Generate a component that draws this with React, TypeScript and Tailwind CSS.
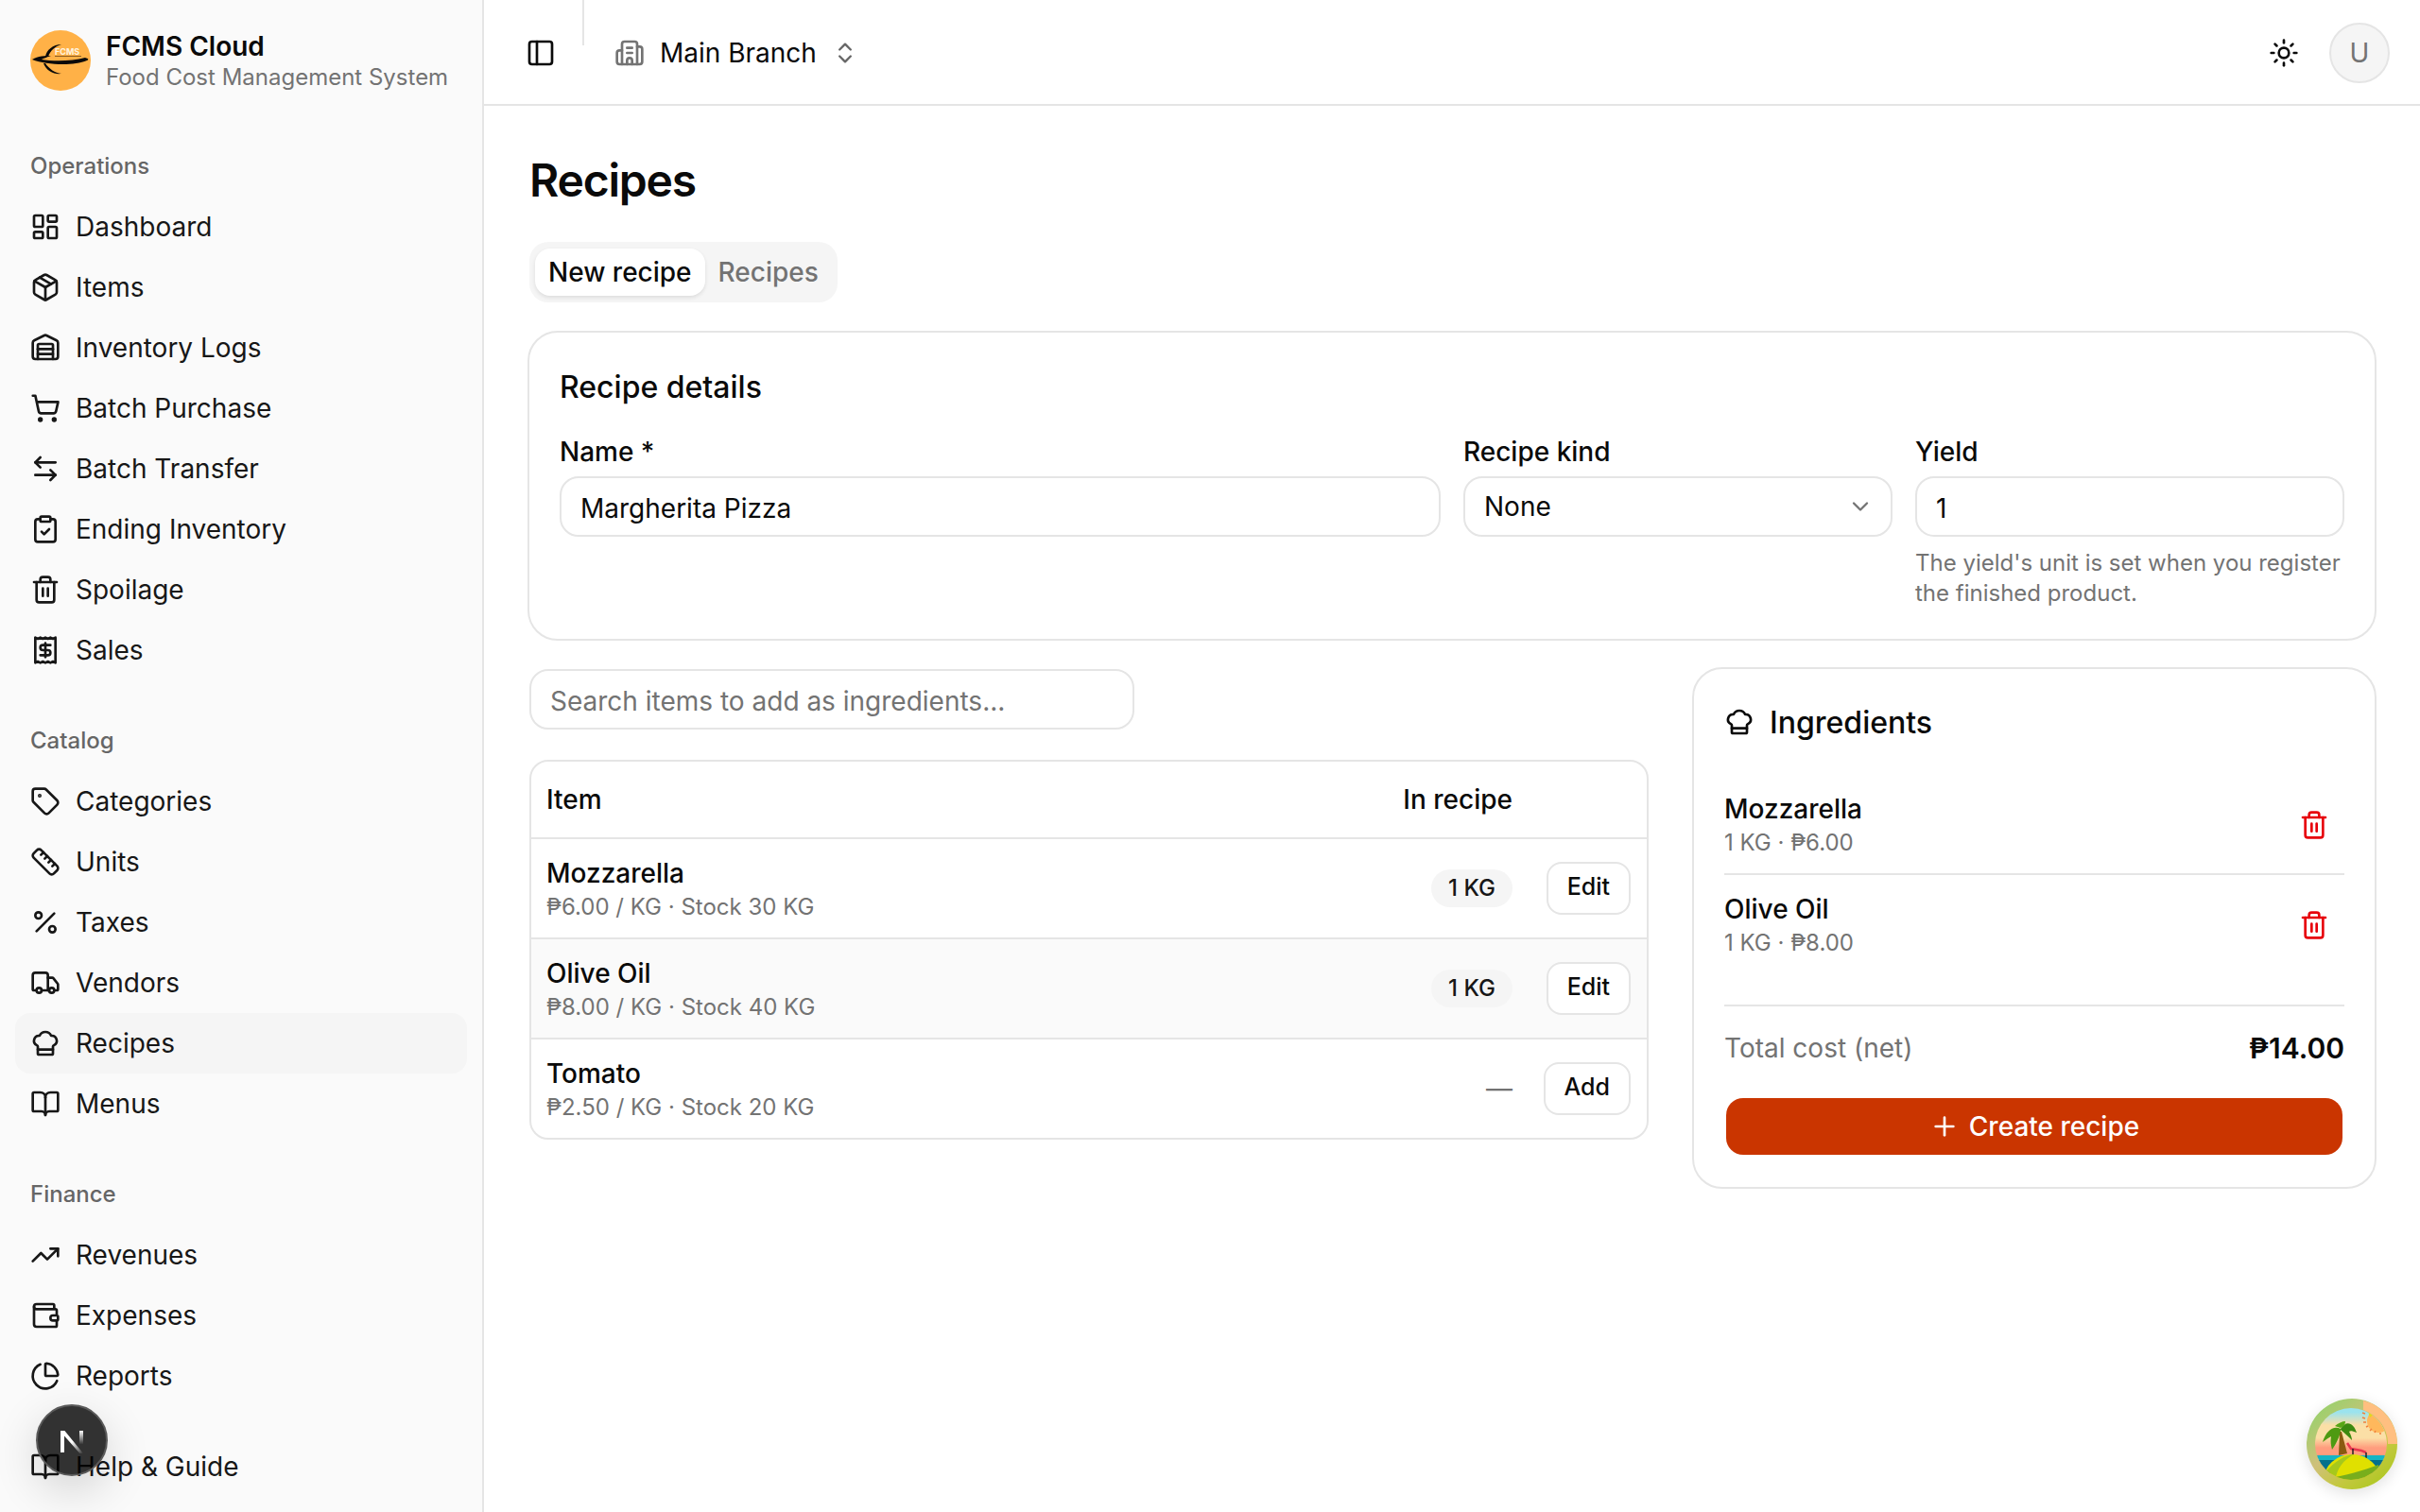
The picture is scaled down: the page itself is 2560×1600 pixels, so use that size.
import {
  ArrowLeftRight,
  BookOpen,
  Building2,
  ChartPie,
  ChefHat,
  ChevronDown,
  ChevronsUpDown,
  ClipboardCheck,
  LayoutDashboard,
  Package,
  PanelLeft,
  Percent,
  Plus,
  Receipt,
  Ruler,
  ShoppingCart,
  Sun,
  Tag,
  Trash2,
  TrendingUp,
  Truck,
  Wallet,
  Warehouse,
} from "lucide-react";

const groups = [
  {
    label: "Operations",
    items: [
      { name: "Dashboard", icon: LayoutDashboard },
      { name: "Items", icon: Package },
      { name: "Inventory Logs", icon: Warehouse },
      { name: "Batch Purchase", icon: ShoppingCart },
      { name: "Batch Transfer", icon: ArrowLeftRight },
      { name: "Ending Inventory", icon: ClipboardCheck },
      { name: "Spoilage", icon: Trash2 },
      { name: "Sales", icon: Receipt },
    ],
  },
  {
    label: "Catalog",
    items: [
      { name: "Categories", icon: Tag },
      { name: "Units", icon: Ruler },
      { name: "Taxes", icon: Percent },
      { name: "Vendors", icon: Truck },
      { name: "Recipes", icon: ChefHat, active: true },
      { name: "Menus", icon: BookOpen },
    ],
  },
  {
    label: "Finance",
    items: [
      { name: "Revenues", icon: TrendingUp },
      { name: "Expenses", icon: Wallet },
      { name: "Reports", icon: ChartPie },
    ],
  },
];

const rows = [
  { name: "Mozzarella", sub: "₱6.00 / KG · Stock 30 KG", qty: "1 KG", action: "Edit" },
  { name: "Olive Oil", sub: "₱8.00 / KG · Stock 40 KG", qty: "1 KG", action: "Edit", hover: true },
  { name: "Tomato", sub: "₱2.50 / KG · Stock 20 KG", qty: "", action: "Add" },
];

const picked = [
  { name: "Mozzarella", sub: "1 KG · ₱6.00" },
  { name: "Olive Oil", sub: "1 KG · ₱8.00" },
];

const LogoMark = () => (
  <svg viewBox="0 0 64 64" className="h-16 w-16 shrink-0">
    <circle cx="32" cy="32" r="32" fill="#ffb147" />
    <path d="M2 31 C8 27 16 27 22 27 C16 29 14 30 12 31 C24 33 44 33 58 29 C62 30 62 31 60 32 C46 38 18 37 2 31Z" fill="#0a0a0a" />
    <path d="M16 28 C17 21 24 15 33 15 C26 17 21 22 19 28Z" fill="#0a0a0a" />
    <path d="M16 35 C20 41 26 45 33 46 C25 47 17 43 14 35Z" fill="#0a0a0a" />
    <rect x="26" y="27" width="28" height="1" fill="#8a5a20" />
    <text x="26" y="26" fontSize="9" fontWeight="700" fill="#fff3df" fontFamily="Inter, sans-serif">
      FCMS
    </text>
  </svg>
);

const NextBadge = () => (
  <div className="absolute bottom-[38px] left-[38px] flex h-[76px] w-[76px] items-center justify-center rounded-full border-2 border-[#5a5a5a] bg-black/80 shadow-[0_16px_48px_rgba(0,0,0,0.16)]">
    <svg viewBox="0 0 24 24" className="mt-[3px] h-[24px] w-[24px]">
      <defs>
        <linearGradient id="nDiag" x1="0" y1="0" x2="1" y2="1">
          <stop offset="0.5" stopColor="#ffffff" />
          <stop offset="1" stopColor="#ffffff" stopOpacity="0" />
        </linearGradient>
        <linearGradient id="nSide" x1="0" y1="0" x2="0" y2="1">
          <stop offset="0" stopColor="#ffffff" />
          <stop offset="0.9" stopColor="#ffffff" stopOpacity="0" />
        </linearGradient>
      </defs>
      <path d="M0 0h4.4L24 24h-3.6L4 5.4V23H0Z" fill="url(#nDiag)" />
      <rect x="20" y="0" width="4" height="16" fill="url(#nSide)" />
    </svg>
  </div>
);

const BeachBadge = () => (
  <div className="absolute bottom-[24px] right-[24px] h-[96px] w-[96px] rounded-full shadow-[0_4px_16px_rgba(0,0,0,0.12)]">
    <svg viewBox="0 0 96 96" className="h-full w-full">
      <defs>
        <linearGradient id="ring" x1="0.1" y1="0" x2="0.9" y2="1">
          <stop offset="0" stopColor="#8fd46a" />
          <stop offset="0.45" stopColor="#cfc07a" />
          <stop offset="0.7" stopColor="#c4c840" />
          <stop offset="1" stopColor="#a8c81a" />
        </linearGradient>
        <linearGradient id="sky" x1="0" y1="0" x2="0" y2="1">
          <stop offset="0.08" stopColor="#9be3ee" />
          <stop offset="0.25" stopColor="#fbdfa6" />
          <stop offset="0.42" stopColor="#fbdfa6" />
          <stop offset="0.55" stopColor="#ff9d7e" />
        </linearGradient>
        <clipPath id="inner">
          <circle cx="47" cy="48" r="38" />
        </clipPath>
      </defs>
      <circle cx="48" cy="48" r="48" fill="url(#ring)" />
      <path d="M60 2 A48 48 0 0 1 96 48 L86 48 A38 38 0 0 0 60 12Z" fill="#ffbf80" />
      <g clipPath="url(#inner)">
        <rect x="0" y="8" width="96" height="80" fill="url(#sky)" />
        <circle cx="76" cy="24" r="12" fill="#ffb85c" />
        <path d="M65 13 h10 l-8 7Z" fill="#e3d91a" />
        <path d="M59 15 l3 1 M59 20 l3 1 M60 25 l3 0 M63 30 l2 -1 M67 34 l2 -2 M72 36 l1 -2 M78 38 l0 -2" stroke="#f0803c" strokeWidth="1.5" />
        <rect x="0" y="60" width="96" height="6" fill="#15b4c4" />
        <rect x="0" y="65" width="96" height="14" fill="#04708c" />
        <path d="M34 60 L35 35 L37 35 L43 58Z" fill="#8a5a10" />
        <path d="M36 32 C29 28 21 33 17 46 C21 43 24 41 26 40 C25 46 26 50 27 54 C31 48 35 41 36 34Z" fill="#4e9a12" />
        <path d="M36 32 C42 22 50 26 53 36 C48 34 46 34 45 35 C47 38 48 42 48 44 C44 40 40 36 36 33Z" fill="#3c8a10" />
        <path d="M30 29 C33 26 38 24 41 24 C41 28 38 30 36 31Z" fill="#58a616" />
        <path d="M43 47 L47 53 L58 55 L63 57" stroke="#e8384f" strokeWidth="2.5" fill="none" />
        <path d="M49 53 v7 M63 57 v6" stroke="#222222" strokeWidth="1.5" />
        <ellipse cx="48" cy="86" rx="30" ry="27" fill="#e0e000" />
        <path d="M20 78 C30 66 40 60 50 59 C38 66 32 74 30 88 L22 86Z" fill="#a6c81c" />
        <path d="M24 84 C40 82 60 76 76 70 L78 90 L28 92Z" fill="#78ae1c" />
        <path d="M32 90 C48 90 62 84 72 78 L64 92Z" fill="#4e9c10" />
      </g>
    </svg>
  </div>
);

const Sidebar = () => (
  <aside className="flex h-full w-[512px] shrink-0 flex-col border-r-2 border-[#e5e5e5] bg-[#fafafa]">
    <div className="flex h-[128px] shrink-0 items-start gap-4 pl-[32px] pt-[32px]">
      <LogoMark />
      <div className="flex flex-col">
        <span className="text-[28px] leading-[34px] font-semibold text-[#0a0a0a]">FCMS Cloud</span>
        <span className="text-[24px] leading-[32px] text-[#737373]">Food Cost Management System</span>
      </div>
    </div>
    <div className="min-h-0 flex-1 overflow-hidden">
      {groups.map((group) => (
        <div key={group.label} className="p-4">
          <div className="flex h-16 items-center px-4 text-[24px] font-medium text-[#666666]">{group.label}</div>
          {group.items.map((item) => (
            <div
              key={item.name}
              className={`flex h-16 items-center gap-4 rounded-2xl px-4 text-[28px] text-[#171717] ${item.active ? "bg-[#f5f5f5]" : ""}`}
            >
              <item.icon size={32} className="shrink-0" />
              <span>{item.name}</span>
            </div>
          ))}
        </div>
      ))}
    </div>
    <div className="p-4">
      <div className="flex h-16 items-center gap-4 rounded-2xl px-4 text-[28px] text-[#171717]">
        <BookOpen size={32} className="shrink-0" />
        <span>Help &amp; Guide</span>
      </div>
    </div>
  </aside>
);

const Topbar = () => (
  <header className="flex h-[112px] shrink-0 items-center border-b-2 border-[#e5e5e5] pl-8 pr-8 pt-[2px]">
    <button className="flex h-14 w-14 items-center justify-center text-[#0a0a0a]">
      <PanelLeft size={32} />
    </button>
    <div className="-mt-[2px] ml-4 h-12 w-[2px] self-start bg-[#e5e5e5]" />
    <div className="ml-8 flex items-center gap-4">
      <Building2 size={32} className="text-[#737373]" />
      <span className="text-[28px] text-[#0a0a0a]">Main Branch</span>
      <ChevronsUpDown size={28} className="text-[#666666]" />
    </div>
    <div className="ml-auto flex items-center gap-5">
      <button className="flex h-14 w-14 items-center justify-center text-[#0a0a0a]">
        <Sun size={32} />
      </button>
      <div className="flex h-16 w-16 items-center justify-center rounded-full border-2 border-[#e5e5e5] bg-[#f5f5f5] text-[28px] text-[#737373]">
        U
      </div>
    </div>
  </header>
);

const Field = ({ label, value }: { label: string; value: string }) => (
  <div>
    <label className="mb-2 block text-[28px] leading-9 font-medium text-[#0a0a0a]">{label}</label>
    <input
      readOnly
      value={value}
      className="h-16 w-full rounded-[20px] border-2 border-[#e5e5e5] bg-white pl-5 pt-[3px] text-[28px] text-[#0a0a0a] outline-none"
    />
  </div>
);

const DetailsCard = () => (
  <section className="-ml-[2px] mt-[30px] rounded-[32px] border-2 border-[#e5e5e5] bg-white p-8">
    <h2 className="pt-[2px] text-[32px] leading-[48px] font-medium text-[#0a0a0a]">Recipe details</h2>
    <div className="mt-[26px] grid grid-cols-4 gap-6">
      <div className="col-span-2">
        <Field label="Name *" value="Margherita Pizza" />
      </div>
      <div>
        <label className="mb-2 block text-[28px] leading-9 font-medium text-[#0a0a0a]">Recipe kind</label>
        <div className="flex h-16 items-center justify-between rounded-[20px] border-2 border-[#e5e5e5] bg-white pl-5 pr-[18px] text-[28px] text-[#0a0a0a]">
          <span>None</span>
          <ChevronDown size={28} className="text-[#737373]" />
        </div>
      </div>
      <div>
        <Field label="Yield" value="1" />
        <p className="mt-3 text-[24px] leading-8 text-[#737373]">
          The yield&apos;s unit is set when you register the finished product.
        </p>
      </div>
    </div>
  </section>
);

const ItemsTable = () => (
  <div className="mt-[32px] overflow-hidden rounded-[20px] border-2 border-[#e5e5e5] bg-white">
    <div className="flex h-[82px] items-center border-b-2 border-[#e5e5e5] pl-4 pr-[17px] text-[28px] font-medium text-[#0a0a0a]">
      <span className="flex-1">Item</span>
      <span className="mr-[125px]">In recipe</span>
    </div>
    {rows.map((row, i) => (
      <div
        key={row.name}
        className={`flex items-center pl-4 pr-[17px] ${i < rows.length - 1 ? "h-[106px] border-b-2 border-[#e5e5e5]" : "h-[104px]"} ${row.hover ? "bg-[#fafafa]" : ""}`}
      >
        <div className="flex-1 pt-[1px]">
          <div className="text-[28px] leading-9 font-medium text-[#0a0a0a]">{row.name}</div>
          <div className="mt-[2px] text-[24px] leading-8 text-[#737373]">{row.sub}</div>
        </div>
        {row.qty ? (
          <span className="flex h-10 items-center rounded-full bg-[#f5f5f5] px-[18px] text-[24px] font-medium text-[#171717]">
            {row.qty}
          </span>
        ) : (
          <span className="text-[28px] text-[#737373]">—</span>
        )}
        <div className="flex w-[125px] justify-end">
          <button className="h-14 rounded-[16px] border-2 border-[#e5e5e5] bg-white px-5 pb-[2px] text-[25px] font-medium text-[#0a0a0a]">
            {row.action}
          </button>
        </div>
      </div>
    ))}
  </div>
);

const IngredientsCard = () => (
  <section className="-ml-[2px] rounded-[32px] border-2 border-[#e5e5e5] bg-white p-8">
    <div className="flex h-12 items-center gap-4 text-[32px] font-medium text-[#0a0a0a]">
      <ChefHat size={32} />
      <span className="pt-[1px]">Ingredients</span>
    </div>
    <div className="mt-8">
      {picked.map((p, i) => (
        <div
          key={p.name}
          className={`flex items-center justify-between pb-4 pt-[18px] ${i === 0 ? "border-b-2 border-[#e5e5e5]" : ""}`}
        >
          <div>
            <div className="mb-[2px] text-[28px] leading-9 font-medium text-[#0a0a0a]">{p.name}</div>
            <div className="text-[24px] leading-8 text-[#737373]">{p.sub}</div>
          </div>
          <Trash2 size={32} className="-mt-[1px] mr-[16px] text-[#e7000b]" />
        </div>
      ))}
    </div>
    <div className="mt-[33px] flex items-center justify-between border-t-2 border-[#e5e5e5] pt-6 text-[28px] leading-10">
      <span className="text-[#737373]">Total cost (net)</span>
      <span className="text-[30px] font-semibold text-[#0a0a0a]">₱14.00</span>
    </div>
    <div className="mb-[2px] mt-[33px] px-[2px]">
      <button className="flex h-[60px] w-full items-center justify-center gap-[10px] rounded-[18px] bg-[#ca3500] text-[28px] font-medium text-white">
        <Plus size={32} />
        Create recipe
      </button>
    </div>
  </section>
);

export default function App() {
  return (
    <div className="relative flex h-[1600px] w-[2560px] overflow-hidden bg-white font-['Inter',sans-serif] antialiased">
      <Sidebar />
      <main className="flex min-w-0 flex-1 flex-col">
        <Topbar />
        <div className="pl-12 pr-[46px] pt-12">
          <h1 className="text-[48px] leading-[62px] font-semibold tracking-tight text-[#0a0a0a]">Recipes</h1>
          <div className="mt-[34px] inline-flex h-16 items-center rounded-[20px] bg-[#f5f5f5] px-[6px] text-[28px] font-medium">
            <span className="flex h-[50px] items-center rounded-[16px] bg-white px-[14px] text-[#0a0a0a] shadow-[0_2px_4px_rgba(0,0,0,0.1)]">
              New recipe
            </span>
            <span className="flex h-[50px] items-center px-[14px] text-[#737373]">Recipes</span>
          </div>
          <DetailsCard />
          <div className="mt-[28px] grid grid-cols-[1184px_1fr] gap-12">
            <div className="pt-[2px]">
              <input
                readOnly
                placeholder="Search items to add as ingredients..."
                className="h-16 w-[640px] rounded-[20px] border-2 border-[#e5e5e5] bg-white px-5 pt-[3px] text-[28px] outline-none placeholder:text-[#737373]"
              />
              <ItemsTable />
            </div>
            <IngredientsCard />
          </div>
        </div>
      </main>
      <NextBadge />
      <BeachBadge />
    </div>
  );
}
